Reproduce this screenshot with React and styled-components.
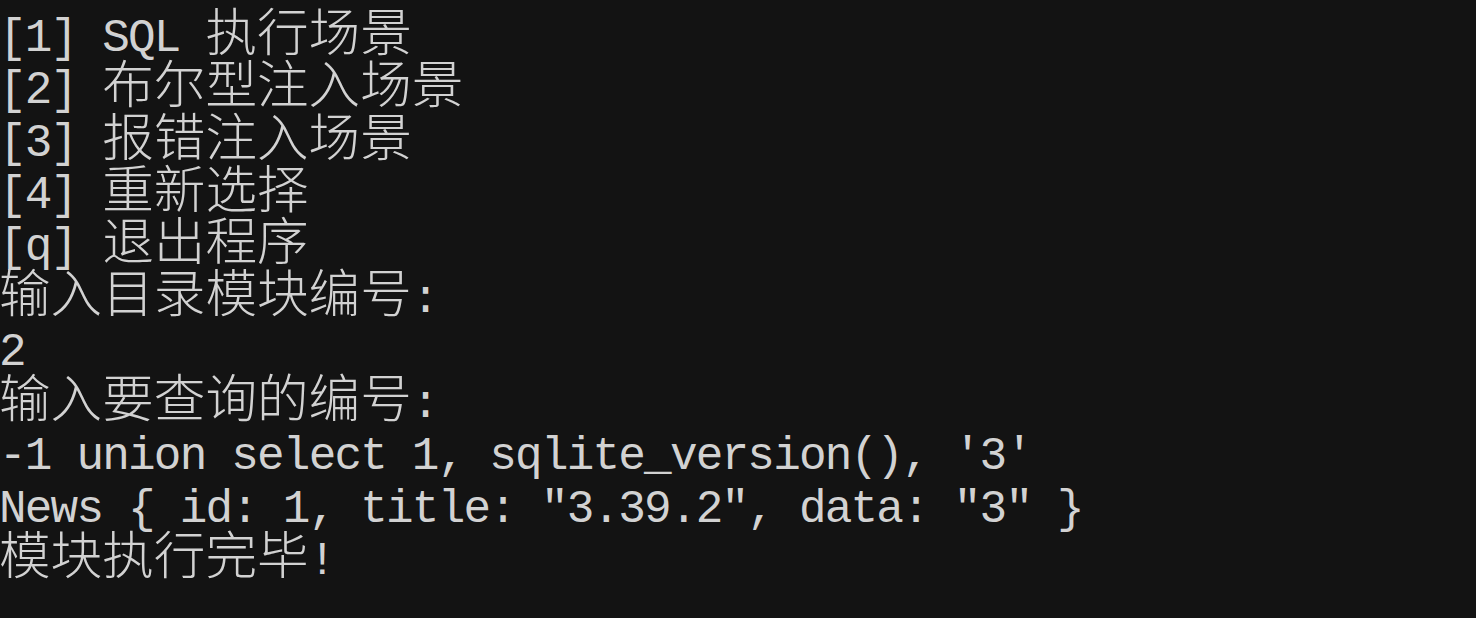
import React from "react";
import styled, { createGlobalStyle } from "styled-components";

const GlobalStyle = createGlobalStyle`
	html, body {
		margin: 0;
		padding: 0;
		background: #131313;
	}
`;

const lines = [
	"[1] SQL 执行场景",
	"[2] 布尔型注入场景",
	"[3] 报错注入场景",
	"[4] 重新选择",
	"[q] 退出程序",
	"输入目录模块编号:",
	"2",
	"输入要查询的编号:",
	"-1 union select 1, sqlite_version(), '3'",
	'News { id: 1, title: "3.39.2", data: "3" }',
	"模块执行完毕!",
];

const App = () => {
	return (
		<>
			<GlobalStyle />
			<Terminal>
				{lines.map((text, i) => (
					<Line key={i}>
						{text.split(/([\u4e00-\u9fff]+)/).map((part, j) =>
							/[\u4e00-\u9fff]/.test(part) ? (
								<Wide key={j}>{part}</Wide>
							) : (
								<Narrow key={j}>{part}</Narrow>
							)
						)}
					</Line>
				))}
			</Terminal>
		</>
	);
};

export default App;

const Terminal = styled.div`
	width: 1476px;
	height: 618px;
	box-sizing: border-box;
	padding: 3px 0 0 0;
	margin-left: -1px;
	background: #131313;
	color: #d2d2d2;
	overflow: hidden;
`;

const Line = styled.div`
	height: 52.3px;
	font-family: "Noto Sans CJK SC", sans-serif;
	font-size: 51.6px;
	line-height: 52.3px;
	white-space: pre;
`;

const Narrow = styled.span`
	font-family: "Liberation Mono", monospace;
	font-size: 46px;
	letter-spacing: -1.8px;
`;

const Wide = styled.span`
	font-family: "Noto Sans CJK SC", sans-serif;
	font-size: 51.6px;
	font-weight: 300;
`;
